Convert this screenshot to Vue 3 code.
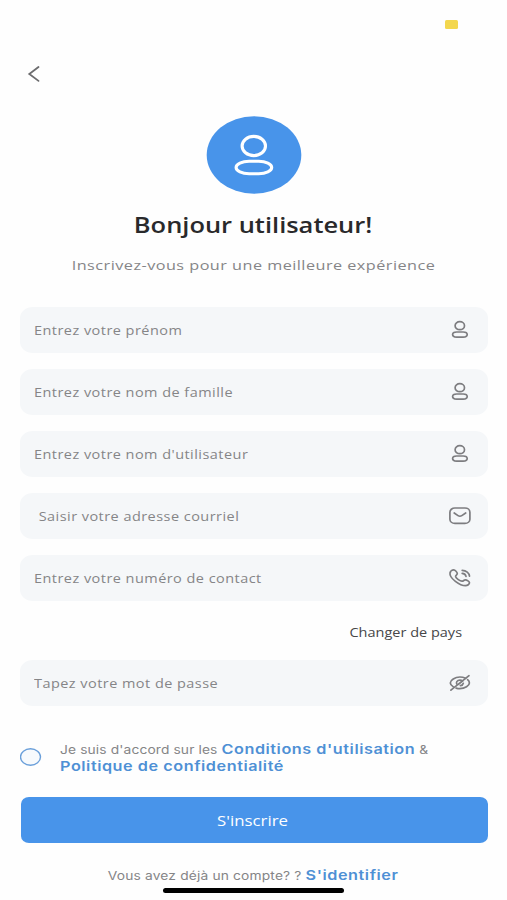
<script setup>
const firstFields = [
  { label: 'Entrez votre prénom', icon: 'user' },
  { label: 'Entrez votre nom de famille', icon: 'user' },
  { label: "Entrez votre nom d'utilisateur", icon: 'user' },
  { label: 'Saisir votre adresse courriel', icon: 'mail' },
  { label: 'Entrez votre numéro de contact', icon: 'phone' },
]
</script>

<template>
  <main class="screen">
    <div class="status"><span class="battery"></span></div>
    <nav class="nav">
      <svg class="back" viewBox="0 0 14 18"><path d="M11.500 2 2.300 9l9.200 6.900" /></svg>
    </nav>

    <header class="hero">
      <svg class="avatar" viewBox="0 0 96 78">
        <ellipse class="disc" cx="48" cy="39" rx="47.3" ry="38.8" />
        <ellipse class="line" cx="47.8" cy="30" rx="11.7" ry="9.6" />
        <rect class="line" x="30.100" y="45.300" width="35.600" height="12.400" rx="13" ry="6.200" />
      </svg>
      <h1 class="title"><span class="wide">Bonjour utilisateur!</span></h1>
      <p class="subtitle"><span class="wide">Inscrivez-vous pour une meilleure expérience</span></p>
    </header>

    <form class="form" @submit.prevent>
      <label v-for="f in firstFields" :key="f.label" class="field">
        <span class="hint wide" :class="{ indented: f.icon === 'mail' }">{{ f.label }}</span>
        <svg v-if="f.icon === 'user'" class="icon" viewBox="0 0 24 20">
          <ellipse cx="11.800" cy="5.700" rx="4.700" ry="4" />
          <rect x="4.600" y="12" width="14.600" height="5.200" rx="4" ry="2.600" />
        </svg>
        <svg v-else-if="f.icon === 'mail'" class="icon" viewBox="0 0 24 20">
          <rect x="1.900" y="2" width="20" height="15.400" rx="5" ry="4.200" />
          <path d="M6.200 7 10 9.600q1.900 1.300 3.800 0L17.700 7" />
        </svg>
        <svg v-else class="icon" viewBox="0 0 24 20">
          <path d="M2 5C2.300 3.200 4.300 1.900 5.700 1.900c1.500 0 3.500 2.500 3.600 3.700 0 1.300-1.900 1.700-1.700 2.900.4 2 4.600 4.900 6.600 4.700 1.400-.1 1.700-1.500 3.200-1.400 1.400.1 4.100 1.800 4.100 3 0 1.300-1.900 2.900-4 2.900C12 17.700 1.200 10.200 2 5Z" />
          <path d="M14.200 2.300c4 .2 7 2.800 7.300 5.900M14.200 5.400c2.200.2 3.500 1.300 3.800 2.900" />
        </svg>
      </label>

      <a class="country"><span class="wide">Changer de pays</span></a>

      <label class="field">
        <span class="hint wide">Tapez votre mot de passe</span>
        <svg class="icon" viewBox="0 0 24 20">
          <path d="M5.400 13.900C3.500 12.700 2.300 11.200 2.300 9.900c0-2.700 4.600-5.900 9.600-5.900 2 0 4 .5 5.700 1.300M19.600 6.700c1.200 1 1.800 2.200 1.800 3.200 0 2.600-4.500 5.800-9.500 5.800-1.400 0-2.600-.2-3.800-.6" />
          <path d="M9.100 11.700c-1.700-2.100 0-4.600 2.800-4.600 1.100 0 2.100.4 2.800 1M15.300 10.300c-.3 1.400-1.400 2.200-2.900 2.400M2.900 17.200 21 2.700M10.400 11.400l3.200-2.600" />
        </svg>
      </label>

      <div class="terms">
        <svg class="check" viewBox="0 0 22 18"><ellipse cx="10.500" cy="9" rx="10" ry="8.200" /></svg>
        <p class="terms-text">
          <span class="wide">Je suis d'accord sur les <b>Conditions d'utilisation</b> &amp;</span>
          <span class="wide"><b>Politique de confidentialité</b></span>
        </p>
      </div>

      <button class="submit"><span class="wide">S'inscrire</span></button>
    </form>

    <footer class="footer">
      <p class="login"><span class="wide">Vous avez déjà un compte? ? <b>S'identifier</b></span></p>
      <div class="home"></div>
    </footer>
  </main>
</template>

<style>
body { background: #fefefe; }
</style>

<style scoped>
.screen {
  width: 507px;
  height: 900px;
  box-sizing: border-box;
  overflow: hidden;
  display: flex;
  flex-direction: column;
  background: #fefefe;
  font-family: "Open Sans", "Noto Sans", sans-serif;
  color: #858587;
}
.wide {
  display: inline-block;
  white-space: nowrap;
  transform: scaleX(1.2);
}
.status { height: 29px; padding: 20px 49px 0 0; box-sizing: border-box; display: flex; justify-content: flex-end; }
.battery { width: 13px; height: 9px; border-radius: 1.5px; background: #f3d74e; }
.nav { padding: 36px 0 0 27px; height: 87px; box-sizing: border-box; }
.back { display: block; width: 14px; height: 18px; fill: none; stroke: #6c6c6e; stroke-width: 1.8; stroke-linecap: round; }
.hero { display: flex; flex-direction: column; align-items: center; height: 190.5px; }
.avatar { width: 96px; height: 78px; flex: none; }
.disc { fill: #4894ea; }
.line { fill: none; stroke: #fff; stroke-width: 3.1; }
.title { margin: 13px 0 0; font-size: 22px; line-height: 34px; font-weight: 600; color: #29292b; }
.title .wide { transform: scaleX(1.157); }
.subtitle { margin: 13px 0 0; font-size: 13.5px; line-height: 22px; letter-spacing: .4px; }
.form { display: flex; flex-direction: column; padding: 0 19px 0 20px; }
.field {
  height: 46px;
  margin-bottom: 16.1px;
  box-sizing: border-box;
  padding: 0 16px 0 14px;
  display: flex;
  align-items: center;
  justify-content: space-between;
  border-radius: 13px / 11px;
  background: #f5f7f9;
}
.hint { padding-top: 1px; font-size: 12.5px; letter-spacing: .4px; transform: scaleX(1.158); transform-origin: left; }
.indented { padding-left: 4px; }
.icon { width: 24px; height: 20px; fill: none; stroke: #7d7d80; stroke-width: 1.7; stroke-linecap: round; stroke-linejoin: round; }
.country { align-self: flex-end; margin: 4px 26px 15px 0; font-size: 12.5px; line-height: 24px; color: #464648; }
.country .wide { transform: scaleX(1.16); transform-origin: right; }
.terms { display: flex; align-items: center; gap: 18px; height: 36px; margin-top: 17.4px; }
.check { width: 22px; height: 18px; fill: #f7fafd; stroke: #6a9fda; stroke-width: 1.4; }
.terms-text { margin: 0; padding-top: 1px; font: 11.5px/16px Inter, sans-serif; letter-spacing: .1px; display: flex; flex-direction: column; }
.terms-text .wide { transform-origin: left; }
b { font-weight: 600; font-size: 13.5px; letter-spacing: .46px; color: #4e90d5; }
.submit {
  height: 46px;
  margin: 22px 0 0 1px;
  padding: 1px 3px 0 0;
  border: 0;
  border-radius: 8px / 7px;
  background: #4894ea;
  color: #fff;
  font: 500 14px/45px "Open Sans", sans-serif;
}
.footer { display: flex; flex-direction: column; align-items: center; padding-top: 22px; }
.login { margin: 0; font: 11.5px/20px Inter, sans-serif; letter-spacing: .13px; }
.home { width: 181px; height: 5px; margin-top: 2px; border-radius: 3px; background: #000; }
</style>
